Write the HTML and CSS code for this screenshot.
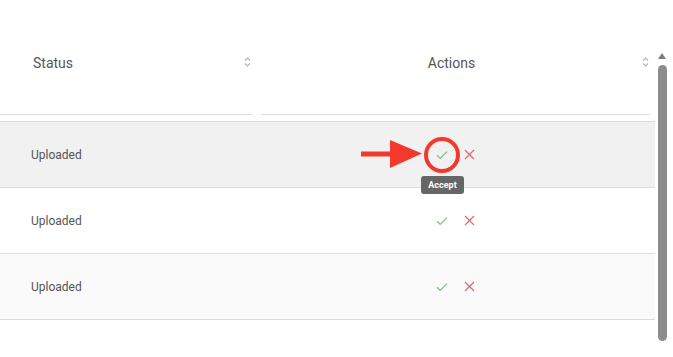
FILE: index.html
```html
<!DOCTYPE html>
<html lang="en">
<head>
    <meta charset="UTF-8">
    <title>Documents</title>
    <link rel="stylesheet" href="styles.css">
</head>
<body>
    <div class="page">
        <div class="table">
            <div class="head">
                <div class="head-cell">
                    <span class="head-label">Status</span>
                    <svg class="sort" width="7" height="10" viewBox="0 0 7 10"><path d="M1 3.5 L3.5 1 L6 3.5 M1 6.5 L3.5 9 L6 6.5" fill="none" stroke="#b3b3b3" stroke-width="1.2"/></svg>
                </div>
                <div class="head-cell center">
                    <span class="head-label">Actions</span>
                    <svg class="sort" width="7" height="10" viewBox="0 0 7 10"><path d="M1 3.5 L3.5 1 L6 3.5 M1 6.5 L3.5 9 L6 6.5" fill="none" stroke="#b3b3b3" stroke-width="1.2"/></svg>
                </div>
            </div>

            <div class="row hover">
                <div class="cell">Uploaded</div>
                <div class="cell actions">
                    <span class="accept-wrap">
                        <svg class="icon" width="12" height="10" viewBox="0 0 12 10"><path d="M1 5.2 L4.2 8.4 L11 1.6" fill="none" stroke="#7cc47c" stroke-width="1.3"/></svg>
                        <span class="ring"></span>
                        <svg class="arrow" width="62" height="30" viewBox="0 0 62 30"><rect x="0" y="12.5" width="32" height="5" fill="#f2392c"/><path d="M29 1 L61 14.5 L29 29 Z" fill="#f2392c"/></svg>
                        <span class="tooltip">Accept</span>
                    </span>
                    <svg class="icon" width="11" height="11" viewBox="0 0 11 11"><path d="M1 1 L10 10 M10 1 L1 10" fill="none" stroke="#e06b6b" stroke-width="1.3"/></svg>
                </div>
            </div>

            <div class="row">
                <div class="cell">Uploaded</div>
                <div class="cell actions">
                    <svg class="icon" width="12" height="10" viewBox="0 0 12 10"><path d="M1 5.2 L4.2 8.4 L11 1.6" fill="none" stroke="#7cc47c" stroke-width="1.3"/></svg>
                    <svg class="icon" width="11" height="11" viewBox="0 0 11 11"><path d="M1 1 L10 10 M10 1 L1 10" fill="none" stroke="#e06b6b" stroke-width="1.3"/></svg>
                </div>
            </div>

            <div class="row striped">
                <div class="cell">Uploaded</div>
                <div class="cell actions">
                    <svg class="icon" width="12" height="10" viewBox="0 0 12 10"><path d="M1 5.2 L4.2 8.4 L11 1.6" fill="none" stroke="#7cc47c" stroke-width="1.3"/></svg>
                    <svg class="icon" width="11" height="11" viewBox="0 0 11 11"><path d="M1 1 L10 10 M10 1 L1 10" fill="none" stroke="#e06b6b" stroke-width="1.3"/></svg>
                </div>
            </div>
        </div>

        <div class="scrollbar">
            <div class="scroll-up"></div>
            <div class="scroll-thumb"></div>
        </div>
    </div>
</body>
</html>
```

FILE: styles.css
```css
body {
    margin: 0;
    padding: 0;
    font-family: Roboto, "Noto Sans", Arial, sans-serif;
    color: #555;
    background-color: #fff;
}
.page {
    display: flex;
    width: 673px;
    height: 357px;
    overflow: hidden;
}
.table {
    width: 655px;
    flex: none;
}
.head {
    display: grid;
    grid-template-columns: 252px 389px;
    column-gap: 9px;
    margin-bottom: 6px;
}
.head-cell {
    height: 115px;
    border-bottom: 1px solid #dcdcdc;
    display: flex;
    align-items: flex-start;
    padding: 53px 1px 0 33px;
    box-sizing: border-box;
    font-size: 14px;
    line-height: 20px;
}
.head-label {
    flex: 1;
}
.head-cell.center {
    padding-left: 0;
}
.head-cell.center .head-label {
    text-align: center;
}
.sort {
    margin-top: 4px;
}
.row {
    display: grid;
    grid-template-columns: 256px 1fr;
    height: 65px;
    border-top: 1px solid #dcdcdc;
}
.row:last-child {
    border-bottom: 1px solid #dcdcdc;
}
.row.hover {
    background-color: #f1f1f1;
}
.row.striped {
    background-color: #fafafa;
}
.cell {
    display: flex;
    align-items: center;
    padding-left: 31px;
    font-size: 12px;
    padding-top: 1px;
}
.cell.actions {
    padding-left: 0;
    justify-content: center;
    gap: 16px;
    padding-top: 0;
}
.icon {
    display: block;
}
.accept-wrap {
    position: relative;
    display: block;
}
.ring {
    position: absolute;
    left: -12px;
    top: -13px;
    width: 28px;
    height: 28px;
    border: 4px solid #f2392c;
    border-radius: 50%;
}
.arrow {
    position: absolute;
    left: -75px;
    top: -11px;
}
.tooltip {
    position: absolute;
    left: -15px;
    top: 26px;
    width: 43px;
    height: 18px;
    line-height: 18px;
    text-align: center;
    background-color: #666;
    color: #fff;
    font-size: 9px;
    font-weight: bold;
    border-radius: 3px;
}
.scrollbar {
    width: 18px;
    flex: none;
    padding-top: 53px;
    padding-left: 3px;
    box-sizing: border-box;
}
.scroll-up {
    width: 0;
    height: 0;
    border-left: 4.5px solid transparent;
    border-right: 4.5px solid transparent;
    border-bottom: 6px solid #7d7d7d;
    margin-bottom: 6px;
}
.scroll-thumb {
    width: 9px;
    height: 276px;
    background-color: #8c8c8c;
    border-radius: 5px;
}
```
